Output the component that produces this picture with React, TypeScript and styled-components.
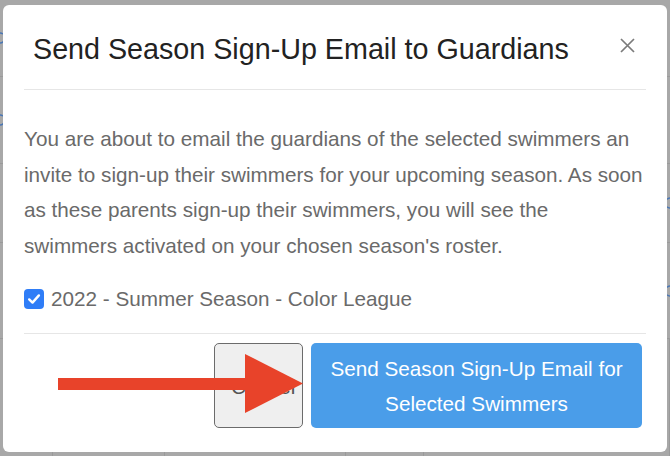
import React from 'react'
import styled, { createGlobalStyle } from 'styled-components'

const GlobalStyle = createGlobalStyle`
    html, body {
        margin: 0;
        padding: 0;
        background: #a8a8a8;
        font-family: "Liberation Sans", Arial, sans-serif;
    }
`

const Page = styled.div`
    position: relative;
    width: 670px;
    height: 456px;
    overflow: hidden;
    background: #a8a8a8;
`

// faded table behind the backdrop
const Behind = styled.div`
    display: flex;
    flex-direction: column;
    width: 100%;
    height: 100%;
`

const BehindRow = styled.div<{ $h: number }>`
    height: ${p => p.$h}px;
    flex: none;
    border-bottom: 1px solid #9a9a9a;
    display: flex;
    justify-content: space-between;
    align-items: center;
`

const BehindCells = styled.div`
    flex: 1;
    display: grid;
    grid-template-columns: 53px 112px 181px 78px 1fr;
`

const BehindCell = styled.div`
    border-right: 1px solid #9a9a9a;
`

const RefreshIcon = styled.svg<{ $side: 'left' | 'right'; $show: boolean }>`
    margin-${p => (p.$side === 'left' ? 'left' : 'right')}: -8px;
    opacity: ${p => (p.$show ? 0.85 : 0)};
`

const Modal = styled.div`
    position: absolute;
    left: 3px;
    top: 5px;
    width: 664px;
    height: 447px;
    background: #fff;
    border-radius: 6px;
    display: flex;
    flex-direction: column;
    box-sizing: border-box;
`

const Header = styled.div`
    margin: 0 21px;
    padding: 27px 0 23px 9px;
    border-bottom: 1px solid #e6e6e6;
    display: flex;
    align-items: center;
    justify-content: space-between;
`

const Title = styled.h4`
    margin: 0;
    font-size: 28.7px;
    line-height: 34px;
    font-weight: 400;
    color: #222;
`

const Close = styled.button`
    border: none;
    background: none;
    padding: 0;
    margin-right: 11px;
    margin-top: -8px;
    width: 16px;
    height: 16px;
    display: flex;
    align-items: center;
    justify-content: center;
    cursor: pointer;
`

const Body = styled.div`
    margin: 0 21px;
    padding: 31px 0 22px;
    color: #6a6a6a;
    font-size: 20.7px;
`

const Para = styled.p`
    margin: 0 0 24px;
    line-height: 35.6px;
`

const CheckRow = styled.label`
    display: flex;
    align-items: center;
    gap: 7px;
    line-height: 24px;
`

const Box = styled.span`
    width: 20px;
    height: 20px;
    border-radius: 4px;
    background: #2f7df7;
    display: flex;
    align-items: center;
    justify-content: center;
    flex: none;
    margin-top: -1px;
`

const Footer = styled.div`
    margin: 0 21px;
    padding: 9px 4px 0 0;
    border-top: 1px solid #e6e6e6;
    display: flex;
    justify-content: flex-end;
    gap: 8px;
`

const Button = styled.button<{ $primary?: boolean }>`
    height: 85px;
    box-sizing: border-box;
    font-family: "Liberation Sans", Arial, sans-serif;
    font-size: 20.7px;
    line-height: 34.5px;
    border-radius: 5px;
    padding: 2px 16px 0;
    cursor: pointer;
    width: ${p => (p.$primary ? '331px' : '89px')};
    background: ${p => (p.$primary ? '#4a9de9' : '#efefef')};
    color: ${p => (p.$primary ? '#fff' : '#555')};
    border: ${p => (p.$primary ? 'none' : '1.5px solid #6b6b6b')};
`

const Arrow = styled.svg`
    position: absolute;
    left: 0;
    top: 0;
    pointer-events: none;
`

const behindRows = [76, 86, 78, 95]

const Refresh = ({ side, show }: { side: 'left' | 'right'; show: boolean }) => (
    <RefreshIcon $side={side} $show={show} width="16" height="16" viewBox="0 0 16 16">
        <path d="M13 8 A5 5 0 1 1 11 4" fill="none" stroke="#3a6fb8" strokeWidth="1.5" />
    </RefreshIcon>
)

const App: React.FC = () => {
    return (
        <Page>
            <GlobalStyle />
            <Behind>
                {behindRows.map((h, id) => (
                    <BehindRow key={id} $h={h}>
                        <Refresh side="left" show={id < 2} />
                        <Refresh side="right" show={id > 1} />
                    </BehindRow>
                ))}
                <BehindCells>
                    {[...Array(5)].map((_, id) => (
                        <BehindCell key={id} />
                    ))}
                </BehindCells>
            </Behind>

            <Modal>
                <Header>
                    <Title>Send Season Sign-Up Email to Guardians</Title>
                    <Close aria-label="Close">
                        <svg width="15" height="15" viewBox="0 0 15 15">
                            <path d="M1 1 L14 14 M14 1 L1 14" stroke="#7b7b7b" strokeWidth="1.7" />
                        </svg>
                    </Close>
                </Header>
                <Body>
                    <Para>
                        You are about to email the guardians of the selected swimmers an invite to
                        sign-up their swimmers for your upcoming season. As soon as these parents
                        sign-up their swimmers, you will see the swimmers activated on your chosen
                        season's roster.
                    </Para>
                    <CheckRow>
                        <Box>
                            <svg width="14" height="14" viewBox="0 0 14 14">
                                <path d="M2.2 7.4 L5.5 10.6 L11.9 3.4" fill="none" stroke="#fff" strokeWidth="2.4" strokeLinecap="round" strokeLinejoin="round" />
                            </svg>
                        </Box>
                        2022 - Summer Season - Color League
                    </CheckRow>
                </Body>
                <Footer>
                    <Button>Cancel</Button>
                    <Button $primary>Send Season Sign-Up Email for Selected Swimmers</Button>
                </Footer>
            </Modal>

            <Arrow width="670" height="456" viewBox="0 0 670 456">
                <rect x="58" y="378" width="192" height="12" fill="#e8432a" />
                <polygon points="245,354 303,383.5 245,413" fill="#e8432a" />
            </Arrow>
        </Page>
    )
}

export default App
